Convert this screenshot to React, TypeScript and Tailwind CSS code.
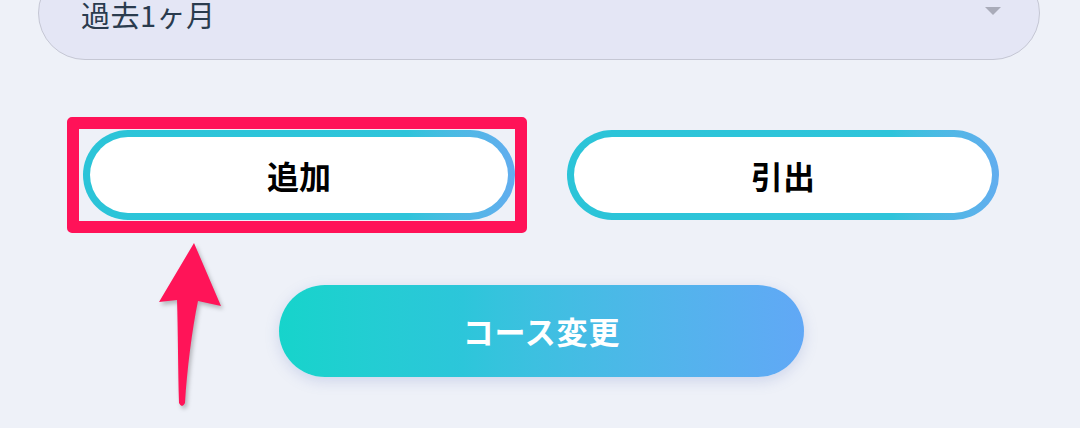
import React from "react";

const jp = { fontFamily: '"Noto Sans CJK JP", "Noto Sans", sans-serif' };

function OutlineButton({ label, marked }: { label: string; marked?: boolean }) {
    return (
        <div className="relative w-[432px] h-[90px]">
            {/* annotation box */}
            {marked && (
                <div className="absolute -left-[16px] -right-[12px] -top-[13px] -bottom-[13px] border-[12px] border-[#ff1258] rounded-[5px]" />
            )}
            <button className="relative w-full h-full rounded-full p-[7px] bg-gradient-to-r from-[#2bc4d8] via-[#2ec4da] via-75% to-[#62adef]">
                <span className="flex items-center justify-center w-full h-full rounded-full bg-white text-[32px] font-bold text-black">
                    {label}
                </span>
            </button>
        </div>
    );
}

export default function App() {
    return (
        <div className="relative min-h-[428px] bg-[#eef1f8] overflow-hidden" style={jp}>
            {/* Period select */}
            <div className="mt-[-34px] ml-[38px] w-[1002px] h-[94px] rounded-full bg-[#e4e6f5] border border-[#c5c7d4] flex items-center justify-between pl-[42px] pr-[38px]">
                <span className="text-[29px] text-[#2a3b4e] pt-[3px] tracking-[0.5px]">過去1ヶ月</span>
                <svg width="16" height="9" viewBox="0 0 16 9" className="mt-[-4px]">
                    <path d="M0 0 L16 0 L8 8 Z" fill="#a9abb9" />
                </svg>
            </div>

            {/* Add / Withdraw */}
            <div className="mt-[70px] ml-[83px] flex gap-[52px]">
                <OutlineButton label="追加" marked />
                <OutlineButton label="引出" />
            </div>

            {/* Course change */}
            <button className="mt-[65px] ml-[279px] w-[525px] h-[92px] rounded-full bg-gradient-to-r from-[#16d4cb] via-[#2cc6da] via-35% to-[#61a8f6] text-white text-[31px] font-bold tracking-wide shadow-[0_4px_14px_rgba(110,130,200,0.25)] flex items-center justify-center">
                コース変更
            </button>

            {/* annotation arrow */}
            <svg
                className="absolute left-[130px] top-[230px]"
                width="120"
                height="190"
                viewBox="0 0 120 190"
                style={{ filter: "drop-shadow(2px 3px 2px rgba(0,0,0,0.25))" }}
            >
                <path
                    d="M64 13 L91 76 L68 71 C62 100 57 140 55 173 Q52 179 49 173 C48 140 48 100 47 70 L29 72 Z"
                    fill="#ff1458"
                />
            </svg>
        </div>
    );
}
